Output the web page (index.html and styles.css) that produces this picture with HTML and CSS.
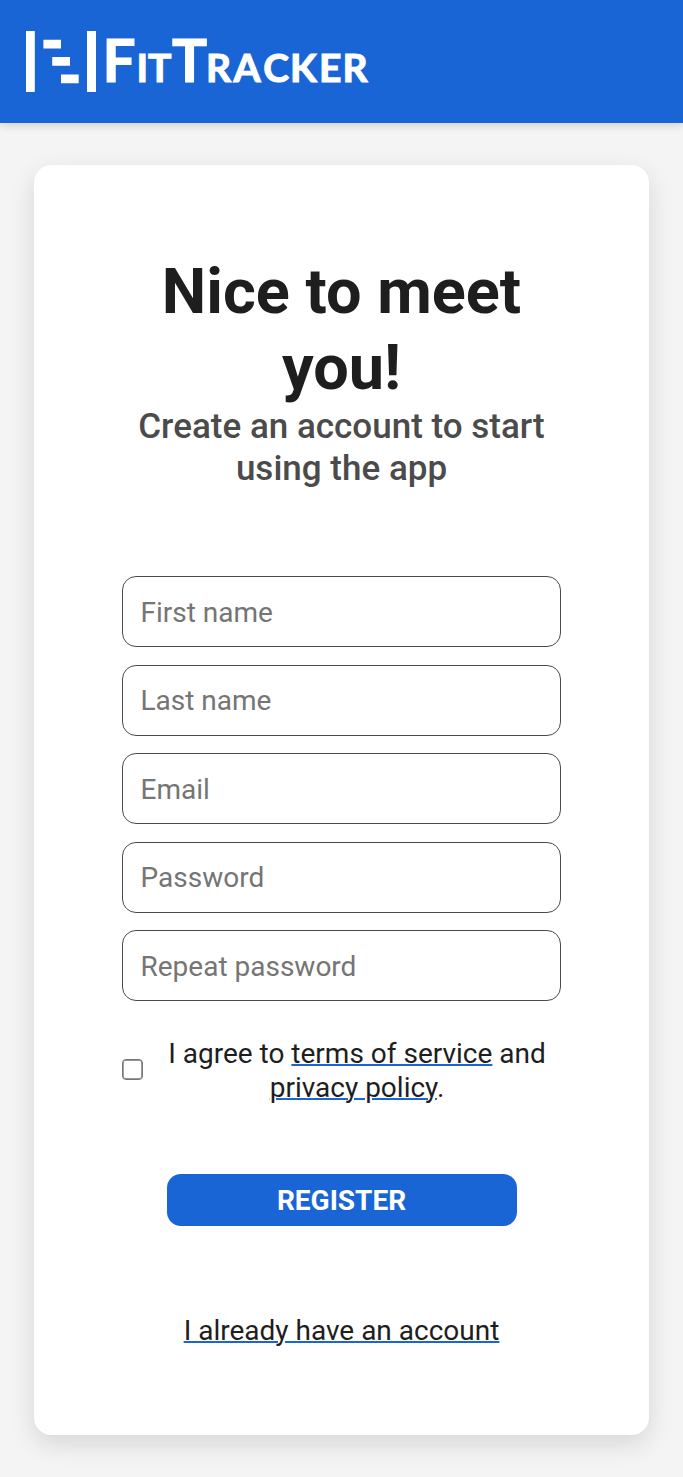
FILE: index.html
```html
<!DOCTYPE html>
<html lang="en">
<head>
<meta charset="utf-8">
<title>FitTracker</title>
<link rel="stylesheet" href="styles.css">
</head>
<body>
<header class="header">
  <svg class="logo" width="345" height="61" viewBox="0 0 345 61" role="img" aria-label="FitTracker">
    <path d="M0 0h8.8v61H0zM61 0h9v61h-9zM17.4 8.8H35v8.8H17.4zM26.2 26H44v8.8H26.2zM35 43.5h17.7v8.7H35z"/>
    <text class="logo-text" y="51" x="76.6 110.4 122.1 146 179.9 207.6 237.2 264 292.9 316.4"><tspan class="logo-big">F</tspan>IT<tspan class="logo-big">T</tspan>RACKER</text>
  </svg>
</header>
<main class="card">
  <h1 class="title">Nice to meet you!</h1>
  <h2 class="subtitle">Create an account to start using the app</h2>
  <form class="form">
    <input class="field" type="text" placeholder="First name">
    <input class="field" type="text" placeholder="Last name">
    <input class="field" type="email" placeholder="Email">
    <input class="field" type="password" placeholder="Password">
    <input class="field" type="password" placeholder="Repeat password">
    <div class="agree">
      <input class="check" id="agree" type="checkbox">
      <label class="agree-text" for="agree">I agree to <a class="link" href="#">terms of service</a> and <a class="link" href="#">privacy policy</a>.</label>
    </div>
    <button class="button" type="button">REGISTER</button>
  </form>
  <a class="link login" href="#">I already have an account</a>
</main>
</body>
</html>
```
FILE: styles.css
```css
* { box-sizing: border-box; margin: 0; padding: 0; }
body {
  padding-bottom: 42px;
  background: #f4f4f4;
  color: #1e1e1e;
  font-family: Roboto, sans-serif;
  font-size: 28px;
  line-height: 34px;
}
.header {
  height: 123px;
  padding: 31px 26px;
  background: #1a65d6;
  box-shadow: 0 2px 9px rgba(0, 0, 0, 0.16);
}
.logo { display: block; fill: #fff; overflow: visible; }
.logo-text {
  font-family: Lato, sans-serif;
  font-weight: 700;
  font-size: 39px;
  stroke: #fff;
  stroke-width: 1.1px;
}
.logo-big { font-size: 58.5px; }
.card {
  display: flex;
  flex-direction: column;
  align-items: center;
  width: 615px;
  height: 1270px;
  margin: 42px auto 0;
  padding: 89px 88px 88px;
  border-radius: 17.5px;
  background: #fff;
  box-shadow: 0 9px 26px rgba(0, 0, 0, 0.12);
  text-align: center;
}
.title { font-size: 63px; line-height: 76px; font-weight: 700; }
.subtitle { font-size: 35px; line-height: 42px; font-weight: 500; color: #4b4b4b; }
.form {
  display: flex;
  flex-direction: column;
  align-items: center;
  gap: 17.5px;
  width: 439px;
  margin-top: 86px;
}
.field {
  width: 100%;
  height: 71px;
  padding: 1px 17.5px 0;
  border: 1px solid #4b4b4b;
  border-radius: 14px;
  background: #fff;
  font: inherit;
}
.field::placeholder { color: #757575; }
.agree { display: flex; align-items: center; width: 100%; margin-top: 16px; }
.check {
  appearance: none;
  flex: none;
  width: 21px;
  height: 21px;
  border: 1px solid #767676;
  border-radius: 4px;
  box-shadow: inset 0 0 0 0.7px #767676;
}
.agree-text { flex: 1; padding: 2px 0 0 10px; }
.link {
  color: inherit;
  text-decoration: underline 2px #1a65d6;
}
.button {
  width: 350px;
  height: 52px;
  margin-top: 52px;
  padding-top: 1px;
  border: 0;
  border-radius: 14px;
  background: #1a65d6;
  color: #fff;
  font: 700 28px/34px Roboto, sans-serif;
}
.login { margin-top: 88px; }
```
